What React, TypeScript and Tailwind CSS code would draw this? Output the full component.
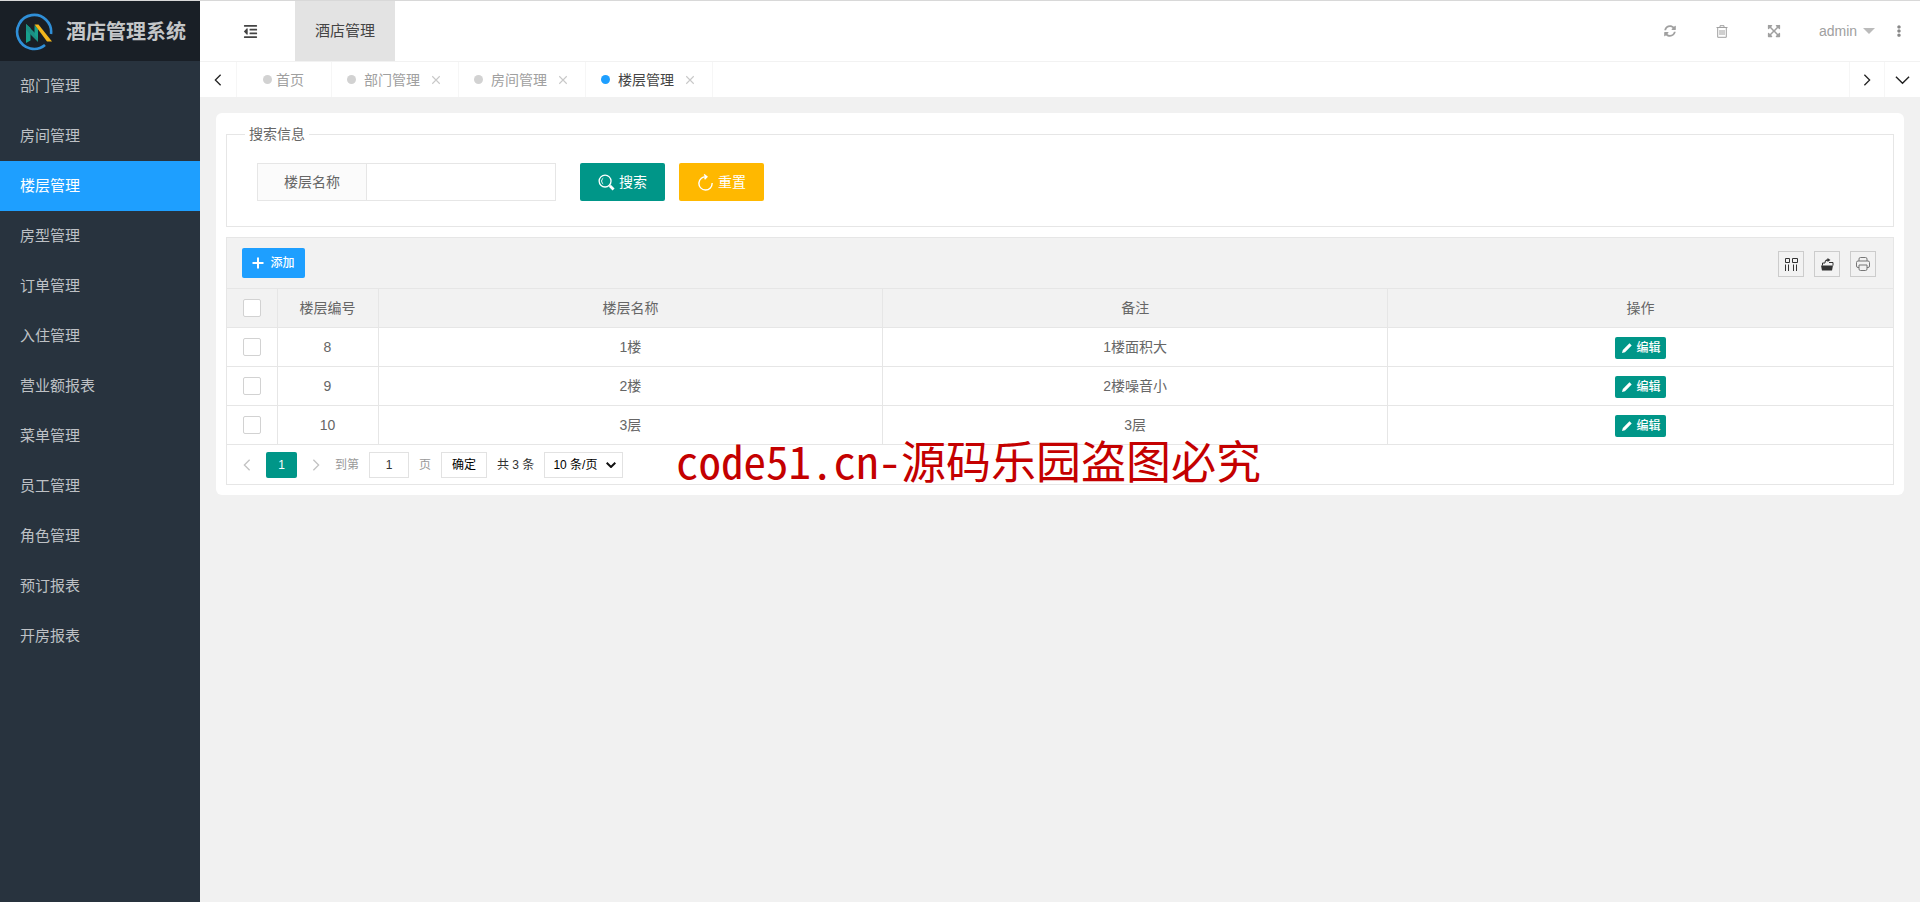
import React, { useState } from "react";
import { FaExpandArrowsAlt, FaOutdent, FaEllipsisV, FaSyncAlt } from "react-icons/fa";

const menu = ["部门管理", "房间管理", "楼层管理", "房型管理", "订单管理", "入住管理", "营业额报表", "菜单管理", "员工管理", "角色管理", "预订报表", "开房报表"];
const tabs = ["部门管理", "房间管理", "楼层管理"];
const floors = [
  { id: 8, name: "1楼", note: "1楼面积大" },
  { id: 9, name: "2楼", note: "2楼噪音小" },
  { id: 10, name: "3层", note: "3层" },
];

function Logo() {
  return (
    <svg viewBox="0 0 40 40" className="size-10 shrink-0" fill="none" aria-hidden="true">
      <path d="M31 33A17 17 0 1 1 37 22" stroke="#2f8fd8" strokeWidth="2.6" />
      <path d="M12 12l4.500 4v12.500L12 31z" fill="#17a08c" />
      <path d="M12 12l12 12v6L12 18z" fill="#1b8f83" />
      <path d="M20.500 13v10l3.500 4V17z" fill="#17a08c" />
      <path d="M20.500 12.500h4L38 29.500h-5z" fill="#f2b61c" />
    </svg>
  );
}

function Chevron({ d, className }: { d: string; className: string }) {
  return (
    <svg viewBox="0 0 16 16" className={className} fill="none" stroke="currentColor" strokeWidth="1.5" aria-hidden="true">
      <path d={d} />
    </svg>
  );
}
const LEFT = "M11 2L5 8l6 6";
const RIGHT = "M5 2l6 6-6 6";

function Check({ label }: { label: string }) {
  return (
    <input
      type="checkbox"
      aria-label={label}
      className="mx-auto block size-[18px] appearance-none rounded-[2px] border border-[#d2d2d2] bg-white checked:bg-[#009688]"
    />
  );
}

export default function App() {
  const [active, setActive] = useState("楼层管理");
  const tool = "flex size-[26px] items-center justify-center border border-[#cccccc] text-[#333]";
  return (
    <div className="flex min-h-screen border-t border-[#d8d8d8] bg-[#f1f1f1] text-sm text-[#666] [font-family:'Liberation_Sans','Noto_Sans_CJK_SC',sans-serif]">
      <aside className="w-[200px] shrink-0 bg-[#28333e]">
        <h1 className="flex h-[60px] items-center gap-3 bg-[#191f26] pt-0.5 pl-[14px] text-xl font-bold whitespace-nowrap text-[#c4c6c8]">
          <Logo />
          酒店管理系统
        </h1>
        <nav>
          {menu.map((m) => (
            <a
              key={m}
              href="#"
              onClick={() => setActive(m)}
              className={
                m === active
                  ? "flex h-[50px] items-center bg-[#1e9fff] pl-5 text-[15px] text-white"
                  : "flex h-[50px] items-center pl-5 text-[15px] text-[#bec1c5]"
              }
            >
              {m}
            </a>
          ))}
        </nav>
      </aside>

      <div className="min-w-0 flex-1">
        <header className="flex h-[61px] items-stretch border-b border-[#f2f2f2] bg-white text-[#a0a0a0]">
          <button aria-label="收起菜单" className="w-[95px] pl-1.5 text-[#444]">
            <FaOutdent className="mx-auto size-[15px]" />
          </button>
          <a href="#" className="flex w-[100px] items-center justify-center bg-[#e3e3e3] text-[15px] text-[#444]">
            酒店管理
          </a>
          <div className="mr-4 ml-auto flex items-center">
            <button aria-label="刷新" className="flex w-[52px] justify-center">
              <FaSyncAlt className="size-3" />
            </button>
            <button aria-label="清理" className="flex w-[52px] justify-center">
              <svg viewBox="0 0 12 13" className="h-[13px] w-3" fill="none" stroke="currentColor" aria-hidden="true">
                <path d="M.5 2.500h11M4 2.500V.7h4v1.800M1.700 2.500v9.800h8.600V2.500M4 5v5M6 5v5M8 5v5" />
              </svg>
            </button>
            <button aria-label="全屏" className="flex w-[52px] justify-center">
              <FaExpandArrowsAlt className="size-[14px]" />
            </button>
            <button className="flex w-[94px] items-center justify-center gap-1.5">
              admin
              <svg viewBox="0 0 12 6" className="h-1.5 w-3" aria-hidden="true">
                <path d="M0 0h12L6 6z" fill="#bbb" />
              </svg>
            </button>
            <button aria-label="更多" className="flex w-2.5 justify-center">
              <FaEllipsisV className="size-3 shrink-0 text-[#888]" />
            </button>
          </div>
        </header>

        <div className="flex h-[35px] items-stretch bg-white text-[#a0a0a0]">
          <button aria-label="向左" className="flex w-[37px] items-center justify-center border-r border-[#f6f6f6] text-[#222]">
            <Chevron d={LEFT} className="size-[14px]" />
          </button>
          <a href="#" className="flex w-[95px] items-center gap-1 border-r border-[#f6f6f6] pl-[26px]">
            <i className="size-[9px] rounded-full bg-[#d2d2d2]" />
            首页
          </a>
          {tabs.map((t) => (
            <div key={t} className="flex w-[127px] items-center border-r border-[#f6f6f6] pl-[15px]">
              <a href="#" className={t === active ? "flex items-center gap-2 text-[#444]" : "flex items-center gap-2"}>
                <i className={t === active ? "size-[9px] rounded-full bg-[#1e9fff]" : "size-[9px] rounded-full bg-[#d2d2d2]"} />
                {t}
              </a>
              <button aria-label={"关闭" + t} className="ml-2.5 text-[#c8c8c8]">
                <Chevron d="M3 3l10 10M13 3L3 13" className="size-3" />
              </button>
            </div>
          ))}
          <button aria-label="向右" className="ml-auto flex w-9 items-center justify-center border-x border-[#f6f6f6] text-[#222]">
            <Chevron d={RIGHT} className="size-[14px]" />
          </button>
          <button aria-label="展开" className="flex w-[35px] items-center justify-center text-[#222]">
            <Chevron d="M1 5l7 7 7-7" className="size-[15px]" />
          </button>
        </div>

        <main className="m-4 rounded-md bg-white px-2.5 pt-[11px] pb-2.5">
          <fieldset className="border border-[#e6e6e6] px-[30px] pb-[25px]">
            <legend className="-ml-3 px-1 leading-5">搜索信息</legend>
            <form className="flex pt-[19px]" onSubmit={(e) => e.preventDefault()}>
              <label htmlFor="floor" className="flex h-[38px] w-[110px] items-center justify-center border border-[#e6e6e6] bg-[#fbfbfb]">
                楼层名称
              </label>
              <input id="floor" className="-ml-px h-[38px] w-[190px] border border-[#e6e6e6] px-2.5 outline-none" />
              <button className="ml-6 flex h-[38px] w-[85px] items-center justify-center gap-1 rounded-[2px] bg-[#009688] text-white">
                <svg viewBox="0 0 18 18" className="size-[17px]" fill="none" stroke="currentColor" aria-hidden="true">
                  <circle cx="7.5" cy="7.5" r="6.3" strokeWidth="1.4" />
                  <path d="M5.500 4.500a3.500 3.500 0 0 0 0 6" />
                  <path d="M12.500 12.500l4 4" strokeWidth="3" />
                </svg>
                搜索
              </button>
              <button type="reset" className="ml-[14px] flex h-[38px] w-[85px] items-center justify-center gap-1 rounded-[2px] bg-[#ffb800] text-white">
                <svg viewBox="0 0 18 18" className="size-[17px]" fill="none" stroke="currentColor" strokeWidth="1.5" aria-hidden="true">
                  <path d="M10 3A7 7 0 1 0 16 9.500M7.500 .5L10.500 3 8 5.500" />
                </svg>
                重置
              </button>
            </form>
          </fieldset>

          <section className="relative mt-2.5 border border-[#e6e6e6]">
            <div className="flex h-[50px] items-center justify-between bg-[#f2f2f2] pr-[17px] pl-[15px]">
              <button className="flex h-[30px] w-[63px] items-center justify-center gap-1.5 rounded-[2px] bg-[#1e9fff] text-xs font-medium text-white">
                <svg viewBox="0 0 12 12" className="size-3" stroke="currentColor" strokeWidth="2" aria-hidden="true">
                  <path d="M6 .5v11M.5 6h11" />
                </svg>
                添加
              </button>
              <div className="flex gap-2.5 pt-0.5">
                <button aria-label="筛选列" className={tool}>
                  <svg viewBox="0 0 14 14" className="size-[14px]" fill="none" stroke="currentColor" aria-hidden="true">
                    <path d="M1.500 1.500h4v4h-4zM8.500 1.500h5v4h-5zM1.500 7.500V14M4.500 7.500V14M9.500 7.500V14M12.500 7.500V14" />
                  </svg>
                </button>
                <button aria-label="导出" className={tool}>
                  <svg viewBox="0 0 14 14" className="size-[14px]" fill="currentColor" aria-hidden="true">
                    <path d="M1 8.500h12L12 13.500H2z" />
                    <path d="M2.500 8.500V6H5M9 5.500h4v3" fill="none" stroke="currentColor" />
                    <path d="M4.500 6C4.500 3.500 6 2.300 7.500 2.300V1L10.500 3 7.500 5V3.700C6 3.700 5.500 4.500 5.500 6z" />
                  </svg>
                </button>
                <button aria-label="打印" className={tool}>
                  <svg viewBox="0 0 14 14" className="size-[14px]" fill="none" stroke="#777" aria-hidden="true">
                    <path d="M3 4V2q0-1.500 1.500-1.500h5Q11 .5 11 2v2M3 10.500H2Q.5 10.500 .5 9V5.500Q.5 4 2 4h10q1.500 0 1.500 1.500V9q0 1.500-1.500 1.500h-1M3 8h8v4q0 1.500-1.500 1.500h-5Q3 13.500 3 12z" />
                  </svg>
                </button>
              </div>
            </div>
            <table className="w-full table-fixed border-collapse text-center">
              <colgroup>
                <col className="w-[50px]" />
                <col className="w-[101px]" />
                <col className="w-[30.3%]" />
                <col className="w-[30.3%]" />
                <col />
              </colgroup>
              <thead>
                <tr className="h-[39px] border-y border-[#e6e6e6] bg-[#f2f2f2]">
                  <th className="border-r border-[#e6e6e6]"><Check label="全选" /></th>
                  <th className="border-r border-[#e6e6e6] font-normal">楼层编号</th>
                  <th className="border-r border-[#e6e6e6] font-normal">楼层名称</th>
                  <th className="border-r border-[#e6e6e6] font-normal">备注</th>
                  <th className="font-normal">操作</th>
                </tr>
              </thead>
              <tbody>
                {floors.map((f) => (
                  <tr key={f.id} className="h-[39px] border-b border-[#e6e6e6]">
                    <td className="border-r border-[#e6e6e6]"><Check label={"选择" + f.name} /></td>
                    <td className="border-r border-[#e6e6e6]">{f.id}</td>
                    <td className="border-r border-[#e6e6e6]">{f.name}</td>
                    <td className="border-r border-[#e6e6e6]">{f.note}</td>
                    <td className="pt-0.5">
                      <button className="mx-auto flex h-[22px] w-[51px] items-center justify-center gap-1 rounded-[2px] bg-[#009688] text-xs font-medium text-white">
                        <svg viewBox="0 0 12 12" className="size-3" fill="currentColor" aria-hidden="true">
                          <path d="M1 11l.8-3L8.500 1.300l2.200 2.200L4 10.200z" />
                        </svg>
                        编辑
                      </button>
                    </td>
                  </tr>
                ))}
              </tbody>
            </table>
            <div className="flex h-[39px] items-center pl-3 text-xs text-[#333]">
              <button aria-label="上一页" className="flex w-[27px] pl-px text-[#c2c2c2]">
                <Chevron d={LEFT} className="size-[14px]" />
              </button>
              <button className="h-[26px] w-[31px] rounded-[2px] bg-[#009688] text-white">1</button>
              <button aria-label="下一页" className="flex w-[38px] justify-center text-[#c2c2c2]">
                <Chevron d={RIGHT} className="size-[14px]" />
              </button>
              <label htmlFor="page" className="text-[#999]">到第</label>
              <input id="page" defaultValue="1" className="mx-2.5 h-[26px] w-10 border border-[#e2e2e2] text-center outline-none" />
              <span className="text-[#999]">页</span>
              <button className="ml-2.5 h-[26px] w-[46px] border border-[#e2e2e2] text-black">确定</button>
              <span className="mx-2.5">共 3 条</span>
              <span className="relative flex items-center">
                <select aria-label="每页条数" className="h-[26px] w-[79px] appearance-none border border-[#e2e2e2] bg-white pl-2 text-black">
                  <option>10 条/页</option>
                </select>
                <svg viewBox="0 0 10 6" className="pointer-events-none absolute right-[7px] h-1.5 w-2.5" fill="none" stroke="#111" strokeWidth="2" aria-hidden="true">
                  <path d="M.7 .7L5 5 9.300 .7" />
                </svg>
              </span>
            </div>
            <p className="pointer-events-none absolute bottom-1 left-[449px] text-[45px] leading-10 whitespace-nowrap text-[#c40000] [font-family:'Noto_Sans_CJK_SC',sans-serif] [font-feature-settings:'hwid']">
              code51.cn-源码乐园盗图必究
            </p>
          </section>
        </main>
      </div>
    </div>
  );
}
